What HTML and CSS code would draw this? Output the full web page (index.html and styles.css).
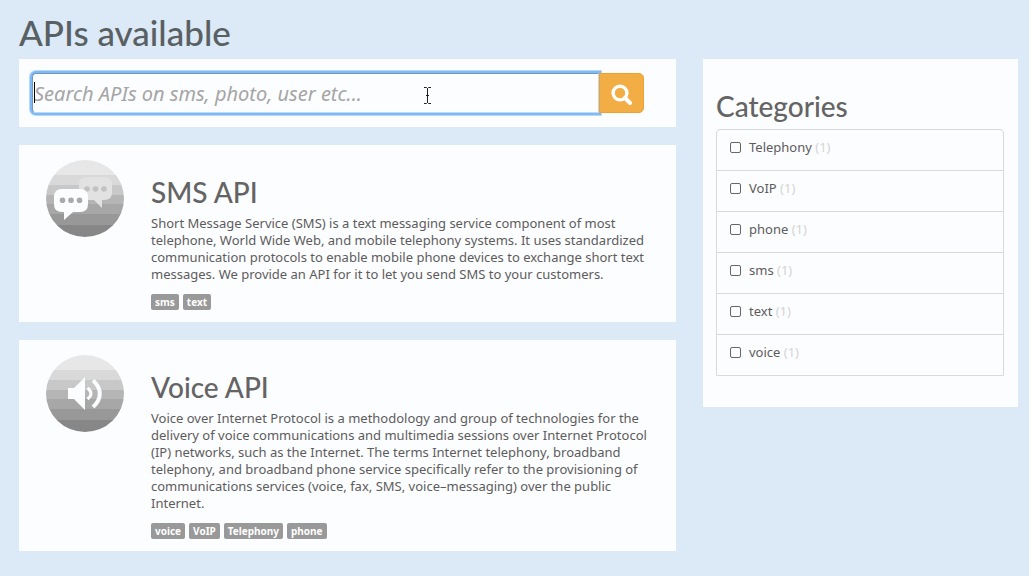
FILE: index.html
```html
<!DOCTYPE html>
<html lang="en">
<head>
<meta charset="utf-8">
<meta name="viewport" content="width=device-width, initial-scale=1">
<title>APIs available</title>
<link rel="stylesheet" href="styles.css">
</head>
<body>
<svg class="defs" aria-hidden="true">
  <defs>
    <clipPath id="disc"><ellipse cx="39" cy="38.5" rx="39" ry="38.5"/></clipPath>
    <g id="bands" clip-path="url(#disc)">
      <path fill="#e7e7e7" d="M0 0h78v15H0z"/>
      <path fill="#d9d9d9" d="M0 15h78v10H0z"/>
      <path fill="#c8c8c8" d="M0 25h78v10H0z"/>
      <path fill="#b5b5b5" d="M0 35h78v9H0z"/>
      <path fill="#a7a7a7" d="M0 44h78v10H0z"/>
      <path fill="#989898" d="M0 54h78v11H0z"/>
      <path fill="#878787" d="M0 65h78v12H0z"/>
    </g>
  </defs>
</svg>
<h1 class="page-title">APIs available</h1>
<div class="layout">
  <main class="results">
    <form class="card search">
      <div class="search-field">
        <input class="search-input" type="text" aria-label="Search APIs" placeholder="Search APIs on sms, photo, user etc...">
        <span class="caret"></span>
        <svg class="pointer" viewBox="0 0 9 17" aria-hidden="true"><path fill="none" stroke="#fff" stroke-width="3" d="M4.500 2v13"/><path fill="none" stroke="#222" d="M1 .5h2.500L4.500 1.500 5.500.5H8M4.500 1v15M1 16.500h2.500l1-1 1 1H8M3 8.500h3"/></svg>
      </div>
      <button class="search-button" type="submit" aria-label="Search">
        <svg class="search-icon" viewBox="0 0 21 21" aria-hidden="true"><circle cx="9" cy="9" r="6.900" fill="none" stroke="#fff" stroke-width="3.400"/><path d="M14 14l5 5" stroke="#fff" stroke-width="4" stroke-linecap="round"/></svg>
      </button>
    </form>
    <article class="card api">
      <svg class="api-icon" viewBox="0 0 78 77" aria-hidden="true">
        <use href="#bands"/>
        <path fill="#e2e2e2" d="M41 17h17q8 0 8 8v8q0 7-8 7h-2v8l-8-8h-7q-8 0-8-7v-8q0-8 8-8z"/>
        <g fill="#c2c2c2"><circle cx="41" cy="29" r="2.800"/><circle cx="49.500" cy="29" r="2.800"/><circle cx="58" cy="29" r="2.800"/></g>
        <path fill="#fcfdff" d="M16 29h18q8 0 8 8v7q0 8-8 8h-7l-9 8v-8h-2q-8 0-8-8v-7q0-8 8-8z"/>
        <g fill="#aaa"><circle cx="16.500" cy="40.300" r="2.800"/><circle cx="25" cy="40.300" r="2.800"/><circle cx="33.500" cy="40.300" r="2.800"/></g>
      </svg>
      <div class="api-body">
        <h2 class="heading">SMS API</h2>
        <p class="text">Short Message Service (SMS) is a text messaging service component of most telephone, World Wide Web, and mobile telephony systems. It uses standardized communication protocols to enable mobile phone devices to exchange short text messages. We provide an API for it to let you send SMS to your customers.</p>
        <div class="tags"><span class="tag">sms</span><span class="tag">text</span></div>
      </div>
    </article>
    <article class="card api">
      <svg class="api-icon" viewBox="0 0 78 77" aria-hidden="true">
        <use href="#bands"/>
        <path fill="#fcfdff" d="M22 33h6l11-11v33L28 44h-6z"/>
        <g fill="none" stroke="#fcfdff"><path stroke-width="3" d="M41.500 33q7 5.500 0 11"/><path stroke-width="4" d="M47 25.500c9 8 9 18.500 0 26.500"/></g>
      </svg>
      <div class="api-body">
        <h2 class="heading">Voice API</h2>
        <p class="text">Voice over Internet Protocol is a methodology and group of technologies for the delivery of voice communications and multimedia sessions over Internet Protocol (IP) networks, such as the Internet. The terms Internet telephony, broadband telephony, and broadband phone service specifically refer to the provisioning of communications services (voice, fax, SMS, voice–messaging) over the public Internet.</p>
        <div class="tags"><span class="tag">voice</span><span class="tag">VoIP</span><span class="tag">Telephony</span><span class="tag">phone</span></div>
      </div>
    </article>
  </main>
  <aside class="card categories">
    <h2 class="heading">Categories</h2>
    <ul class="category-list">
      <li class="category"><label class="category-label"><input class="tick" type="checkbox"><span>Telephony <span class="count">(1)</span></span></label></li>
      <li class="category"><label class="category-label"><input class="tick" type="checkbox"><span>VoIP <span class="count">(1)</span></span></label></li>
      <li class="category"><label class="category-label"><input class="tick" type="checkbox"><span>phone <span class="count">(1)</span></span></label></li>
      <li class="category"><label class="category-label"><input class="tick" type="checkbox"><span>sms <span class="count">(1)</span></span></label></li>
      <li class="category"><label class="category-label"><input class="tick" type="checkbox"><span>text <span class="count">(1)</span></span></label></li>
      <li class="category"><label class="category-label"><input class="tick" type="checkbox"><span>voice <span class="count">(1)</span></span></label></li>
    </ul>
  </aside>
</div>
</body>
</html>
```

FILE: styles.css
```css
* { box-sizing: border-box; }

body {
  margin: 0;
  padding: 12px 11px 25px 19px;
  background: #dce9f6;
  color: #5c5c5c;
  font: 13px/17px "Noto Sans", sans-serif;
}

.defs { position: absolute; width: 0; height: 0; }

.page-title,
.heading { margin: 0; font-family: Lato, sans-serif; font-weight: 500; }
.page-title { color: #596063; font-size: 35px; line-height: 40px; margin-bottom: 7px; }
.heading { color: #646464; font-size: 28px; line-height: 36px; }

.layout {
  display: grid;
  grid-template-columns: 657fr 315fr;
  gap: 27px;
  align-items: start;
}
.results { display: grid; gap: 18px; }
.card { background: #fcfdff; }

.search { display: flex; padding: 14px 32px 14px 13px; }
.search-field { position: relative; flex: 1; }
.search-input {
  display: block;
  width: 100%;
  height: 40px;
  padding: 0 1px;
  border: 1px solid #7398c4;
  border-right-color: #bcd9f8;
  border-bottom-color: #bcd9f8;
  border-radius: 4px 0 0 4px;
  outline: 0;
  background: #fcfdff;
  box-shadow: 0 0 0 2px #7fbaf8, 0 0 0 3px #b9d8f8;
  color: #555;
  font: italic 20px "Noto Sans", sans-serif;
}
.search-input::placeholder { color: #a5a5a5; opacity: 1; }
.caret { position: absolute; top: 9px; left: 2px; width: 1px; height: 21px; background: #000; }
.pointer { position: absolute; top: 14px; left: 69%; width: 9px; height: 17px; }
.search-button {
  display: grid;
  place-items: center;
  width: 45px;
  height: 40px;
  padding: 3px 0 0;
  border: 1px solid #f0a02c;
  border-radius: 0 5px 5px 0;
  background: #f2ad45;
  position: relative;
}
.search-icon { width: 21px; height: 21px; }

.api { display: flex; align-items: flex-start; gap: 27px; padding: 15px 24px 12px 27px; }
.api-icon { flex: none; width: 78px; height: 77px; }
.api-body { flex: 1; padding-top: 14px; }
.text { margin: 5px 0 11px; }
.tags { display: flex; flex-wrap: wrap; gap: 4px; }
.tag {
  padding: 0 4px;
  border-radius: 2px;
  background: #999;
  color: #fff;
  font-size: 10px;
  font-weight: 700;
  line-height: 16px;
}

.categories { padding: 29px 14px 31px 13px; }
.category-list {
  margin: 5px 0 0;
  padding: 0;
  border: 1px solid #d9dadb;
  border-radius: 4px 4px 0 0;
  list-style: none;
}
.category { padding: 9px 13px 14px; }
.category + .category { border-top: 1px solid #d9dadb; }
.category-label { display: flex; align-items: center; gap: 8px; }
.tick {
  appearance: none;
  width: 11px;
  height: 11px;
  margin: 0;
  border: 1px solid #666;
  border-radius: 2px;
}
.tick:checked { background: #666; }
.count { color: #d4d4d4; }
```
